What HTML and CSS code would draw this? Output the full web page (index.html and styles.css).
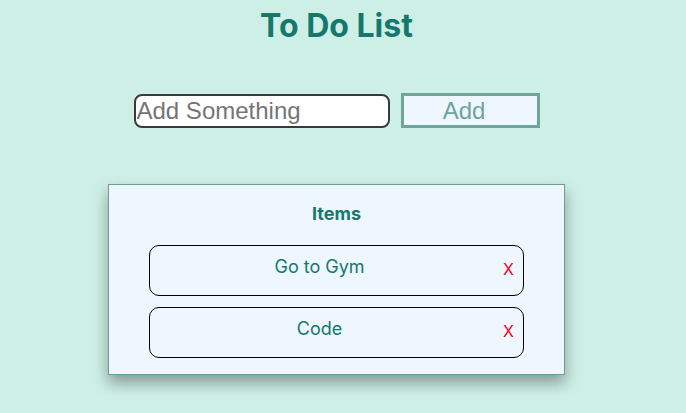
FILE: index.html
```html
<!DOCTYPE html>
<html>
<head>
<meta charset="utf-8">
<link rel="stylesheet" href="styles.css">
</head>
<body>
<div class="app">
  <h1 class="title">To Do List</h1>
  <div class="form">
    <input class="field" type="text" placeholder="Add Something">
    <button class="add">Add</button>
  </div>
  <div class="card">
    <h2 class="card-title">Items</h2>
    <ul class="list">
      <li class="item"><span class="item-text">Go to Gym</span><span class="del">X</span></li>
      <li class="item"><span class="item-text">Code</span><span class="del">X</span></li>
    </ul>
  </div>
</div>
</body>
</html>
```
FILE: styles.css
```css
html, body {
  margin: 0;
  padding: 0;
  background: #cdefe5;
  font-family: Inter, "Noto Sans", sans-serif;
}
.app {
  display: flex;
  flex-direction: column;
  align-items: center;
  padding-top: 7px;
  padding-right: 13px;
  padding-bottom: 20px;
}
.title {
  margin: 0;
  font-size: 32px;
  font-weight: 700;
  color: #16786c;
  line-height: 38px;
}
.form {
  display: flex;
  align-items: center;
  gap: 11px;
  margin-top: 48px;
}
.field {
  width: 256px;
  height: 34px;
  box-sizing: border-box;
  border: 2px solid #3a3a3a;
  border-radius: 8px;
  padding: 0 1px;
  font-family: "Liberation Sans", Arial, sans-serif;
  font-size: 24px;
  background: #fff;
  outline: none;
}
.field::placeholder {
  color: #757575;
}
.add {
  width: 139px;
  height: 35px;
  box-sizing: border-box;
  border: 3px solid #6fa49a;
  background: #eef6ff;
  color: #6fa49a;
  font-family: "Liberation Sans", Arial, sans-serif;
  font-size: 24px;
  padding: 0 12px 0 0;
}
.card {
  margin-top: 56px;
  width: 457px;
  box-sizing: border-box;
  border: 1px solid #6a9e96;
  background: #eef6ff;
  box-shadow: 0 8px 14px rgba(0, 0, 0, 0.35);
  padding: 18px 40px 16px;
}
.card-title {
  margin: 0;
  text-align: center;
  font-size: 18px;
  font-weight: 700;
  color: #16786c;
  line-height: 22px;
}
.list {
  list-style: none;
  margin: 20px 0 0;
  padding: 0;
  display: flex;
  flex-direction: column;
  gap: 11px;
}
.item {
  height: 51px;
  box-sizing: border-box;
  border: 1px solid #000;
  border-radius: 10px;
  display: flex;
  align-items: center;
  padding-right: 9px;
  color: #16786c;
  font-size: 18px;
}
.item-text {
  flex: 1;
  text-align: center;
  margin-bottom: 9px;
}
.del {
  color: #f0001c;
  font-size: 16px;
  font-weight: 400;
  margin-left: 14px;
  margin-bottom: 3px;
}
```
